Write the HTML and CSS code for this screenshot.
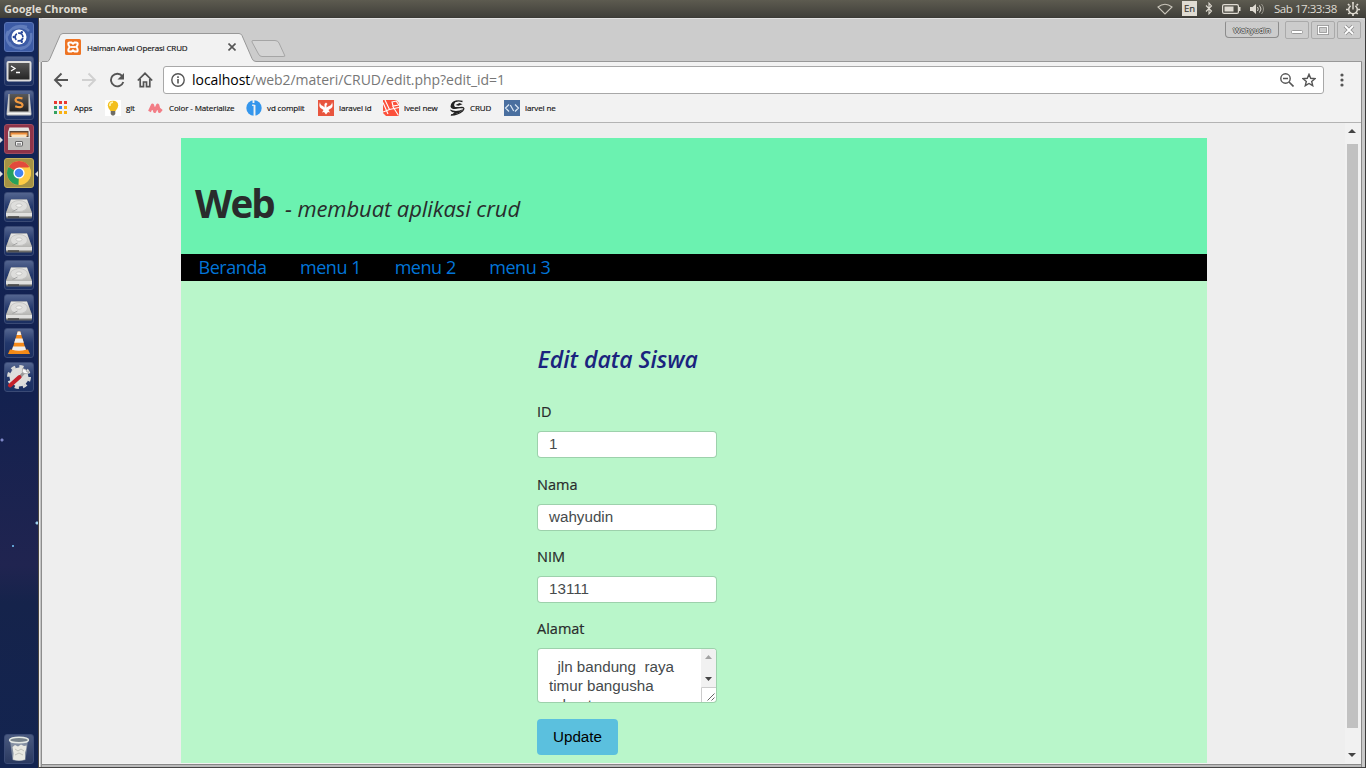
FILE: index.html
```html
<!DOCTYPE html>
<html lang="id">
<head>
<meta charset="utf-8">
<title>Halman Awal Operasi CRUD</title>
<link rel="stylesheet" href="styles.css">
</head>
<body>
<svg width="0" height="0" class="defs">
  <defs>
    <linearGradient id="metal" x2="0" y2="1"><stop stop-color="#e9e9e7"/><stop offset="1" stop-color="#b5b5b2"/></linearGradient>
    <linearGradient id="dark" x2="0" y2="1"><stop stop-color="#595959"/><stop offset="1" stop-color="#222"/></linearGradient>
    <symbol id="disk" viewBox="0 0 30 30">
      <path d="M7 7.500h16l5 13v5q0 1-1 1H3q-1 0-1-1v-5z" fill="#6d6d6b"/>
      <path d="M7 7.500h16l5 13.500H2z" fill="url(#metal)"/>
      <ellipse cx="15" cy="14" rx="8.500" ry="5.500" fill="#dededc" stroke="#c2c2c0" stroke-width=".8"/>
      <ellipse cx="15" cy="13.500" rx="3" ry="1.700" fill="#f2f2f0" stroke="#b5b5b3" stroke-width=".6"/>
      <path d="M8.500 19.500l5-2.500" stroke="#999" stroke-width=".8"/>
      <path d="M2 21h26v3.500H2z" fill="#e0e0de"/><path d="M4 25h11" stroke="#444" stroke-width="1.500"/>
    </symbol>
  </defs>
</svg>

<header class="panel">
  <span class="panel-title">Google Chrome</span>
  <div class="indicators">
    <svg width="16" height="12" viewBox="0 0 16 12"><path d="M1 4Q8-1.500 15 4L8 11z" fill="none" stroke="#c9c5ba" stroke-width="1.100"/></svg>
    <span class="lang">En</span>
    <svg class="bt" width="8" height="13" viewBox="0 0 8 13"><path d="M1 3.500l5.500 5.500L4 11.800V1.200L6.500 4 1 9.500" fill="none" stroke="#dfdbd2" stroke-width="1.100"/></svg>
    <svg class="bat" width="19" height="10" viewBox="0 0 19 10"><rect x=".6" y=".6" width="15.800" height="8.800" rx="1.500" fill="none" stroke="#dfdbd2" stroke-width="1.200"/><path d="M2.500 2.500h9v5h-9z" fill="#dfdbd2"/><path d="M17 3h1.500v4H17z" fill="#dfdbd2"/></svg>
    <svg class="vol" width="16" height="12" viewBox="0 0 16 12"><path d="M1 4h2.500L7 1v10L3.500 8H1z" fill="#dfdbd2"/><path d="M8.500 4q1.500 2 0 4M10.500 2.500q3 3.500 0 7" fill="none" stroke="#dfdbd2"/><path d="M12.500 1q4 5 0 10" fill="none" stroke="#99968d"/></svg>
    <span class="clock">Sab 17:33:38</span>
    <svg width="14" height="14" viewBox="0 0 14 14"><path d="M7 0v2M2 2l1.500 1.500M12 2l-1.500 1.500M0 7.500h2M12 7.500h2M2.300 12l1.500-1.500M11.700 12l-1.500-1.500M7 12v2" stroke="#dfdbd2" stroke-width="1.700"/><path d="M4.700 3.800a4.300 4.300 0 1 0 4.600 0" fill="none" stroke="#dfdbd2" stroke-width="1.500"/><path d="M7 2v5.500" stroke="#dfdbd2" stroke-width="1.400"/></svg>
  </div>
</header>

<div class="desktop">
  <nav class="launcher">
    <div class="tile tile-dash"><svg viewBox="0 0 30 30"><path d="M3 14Q8 1 23 5M27 11Q29 24 16 27M7 24Q0 17 4 9M9 7Q18 2 25 9M21 25Q10 29 5 20" fill="none" stroke="#8ba5d8" stroke-width="2.500" opacity=".45"/><circle cx="15" cy="15" r="7.500" fill="#fff"/><circle cx="15" cy="15" r="3.900" fill="none" stroke="#28479a" stroke-width="1.700" stroke-dasharray="6.900 1.270" stroke-dashoffset="-.6"/><circle cx="9.800" cy="15" r="1.200" fill="#28479a"/><circle cx="17.800" cy="10.300" r="1.200" fill="#28479a"/><circle cx="17.800" cy="19.700" r="1.200" fill="#28479a"/></svg></div>
    <div class="tile"><svg viewBox="0 0 30 30"><rect x="3.500" y="6" width="23" height="18.500" rx="1" fill="url(#dark)" stroke="#ddd" stroke-width="2"/><path d="M7 10l4 2.500-4 2.500M12 16.500h4" fill="none" stroke="#fff" stroke-width="1.300"/></svg></div>
    <div class="tile"><svg viewBox="0 0 30 30"><path d="M4.500 4h21l2 20q0 1.500-1.500 1.500H4q-1.500 0-1.500-1.500z" fill="#c9c9c7"/><path d="M5.500 4h19v17.500h-19z" fill="url(#dark)"/><path d="M3.500 23.500h23" stroke="#f5f5f3" stroke-width="1.500"/><path d="M18.500 8.500Q12 6.500 11.500 9.800q0 2 3.500 2.700 3.800.7 3.500 3-.8 3-7.300.7" fill="none" stroke="#f09a40" stroke-width="2.200"/></svg></div>
    <div class="tile tile-files"><i class="pip"></i><svg viewBox="0 0 30 30"><path d="M5.500 3.500h19L26 8v18H4V8z" fill="url(#metal)"/><path d="M5.500 7h19v6h-19z" fill="#5d4636"/><path d="M6.500 8.500h17V12h-17z" fill="#ef8f3c"/><path d="M7.500 10.500h15V13h-15z" fill="#fbe3bd"/><path d="M4 13h22v13H4z" fill="#bdbdba"/><path d="M4 13.500h22" stroke="#ddd"/><rect x="11.500" y="17.500" width="7" height="4.500" rx=".5" fill="#eee" stroke="#666"/><path d="M13 20h4" stroke="#555"/></svg></div>
    <div class="tile tile-chrome"><i class="pip"></i><i class="pip pip-right"></i><svg viewBox="0 0 30 30"><circle cx="15" cy="15" r="12" fill="#fc4"/><path d="M15 15L4.600 9A12 12 0 0 1 25.400 9z" fill="#e24a3c"/><path d="M15 15l-.5 12A12 12 0 0 1 4.600 9z" fill="#26a05b"/><path d="M15 9.500h10.800q2.400 5.500-.3 11T15 27l5-9z" fill="#fc4"/><circle cx="15" cy="15" r="5.600" fill="#fff"/><circle cx="15" cy="15" r="4.300" fill="#4384f0"/></svg></div>
    <div class="tile"><svg><use href="#disk"/></svg></div>
    <div class="tile"><svg><use href="#disk"/></svg></div>
    <div class="tile"><svg><use href="#disk"/></svg></div>
    <div class="tile"><svg><use href="#disk"/></svg></div>
    <div class="tile"><svg viewBox="0 0 30 30"><path d="M6 21.500h18l2 4.500H4z" fill="#f28a17"/><path d="M13.700 3.500h2.600L22 22.500q-7 2.500-14 0z" fill="#f58a1a"/><path d="M13.700 3.500h2.600l1 3.500h-4.600zM11.500 10.500h7l1.300 4.200h-9.600zM9 18.500h12l1 3.300q-7 2-14 0z" fill="#eee"/></svg></div>
    <div class="tile"><svg viewBox="0 0 30 30"><circle cx="15" cy="15" r="10.500" fill="none" stroke="#d9d9d7" stroke-width="3" stroke-dasharray="4.200 4.050"/><circle cx="15" cy="15" r="9.500" fill="#dededc"/><path d="M15.500 15.500l4.500-5" stroke="#999" stroke-width="3"/><path d="M18.500 6.500q-1 4 1.500 5t5-1.500l-2.500-.5-.5-2z" fill="#f8f8f8" stroke="#999" stroke-width=".7"/><path d="M6 23.500L15.500 15" stroke="#c4202a" stroke-width="4" stroke-linecap="round"/></svg></div>
    <div class="tile tile-trash"><svg viewBox="0 0 30 30"><path d="M6 6l2.500 20q6.500 2 13 0L24 6z" fill="#aab4bb" opacity=".65"/><path d="M8.500 13l2.500-2 3 1.500 3-2 3 1.500 2.500-.5-.5 4-1 3 0 7q-6 2-12 0l.5-6z" fill="#e9e9e2"/><path d="M11 15l3 2 3-2 3 2M11 21l4-2 4 2" fill="none" stroke="#c0c2ba"/><ellipse cx="15" cy="6" rx="9.500" ry="2.800" fill="#78838c" stroke="#e5e9e5" stroke-width="1.400"/></svg></div>
  </nav>

  <div class="window">
    <div class="tabstrip">
      <svg class="tab-shapes" width="1320" height="44" viewBox="0 0 1320 44">
        <path d="M0 43.500H5.500Q7 43 8 40.500L18 17.500Q19 15.500 21 15.500H197Q199 15.500 200 17.500L210 40.500Q211 43.500 214 43.500H1320V45H0z" fill="#f2f2f2" stroke="#989898"/>
        <path d="M211 22.500H233Q236 22.500 237 25L242.500 37Q244 38.500 241 38.500H220Q217.500 38.500 216.500 36L210 24Q209.500 22.500 211 22.500z" fill="#d4d4d4" stroke="#a5a5a5"/>
      </svg>
      <div class="tab">
        <svg width="16" height="16" viewBox="0 0 16 16"><rect width="16" height="16" rx="1.500" fill="#ee7424"/><path d="M4.800 3.500h1.700l1.500 1.300 1.500-1.300h1.700q1.500 0 1.500 1.600T11 8q1.700 1 1.700 2.900t-1.500 1.600H9.500L8 11.200l-1.500 1.300H4.800q-1.500 0-1.500-1.600T5 8Q3.300 7 3.300 5.100T4.800 3.500z" fill="none" stroke="#fff" stroke-width="2"/><path d="M6 8h4" stroke="#fff" stroke-width="1.800"/></svg>
        <span class="tab-title">Halman Awal Operasi CRUD</span>
        <svg class="tab-close" width="8" height="8" viewBox="0 0 8 8"><path d="M.5.500l7 7M7.500.500l-7 7" stroke="#555" stroke-width="1.600"/></svg>
      </div>
      <div class="controls">
        <span class="user">Wahyudin</span>
        <span class="ctl"><svg width="12" height="12"><rect x=".5" y="6.500" width="11" height="3" rx="1" fill="#fff" stroke="#999"/></svg></span>
        <span class="ctl"><svg width="12" height="12"><rect x="1.500" y="2.500" width="9" height="7" fill="none" stroke="#999" stroke-width="3"/><rect x="1.500" y="2.500" width="9" height="7" fill="none" stroke="#fff" stroke-width="1.200"/></svg></span>
        <span class="ctl"><svg width="12" height="12"><path d="M2 2l8 8M10 2l-8 8" stroke="#8f8f8f" stroke-width="3.600"/><path d="M2 2l8 8M10 2l-8 8" stroke="#fff" stroke-width="1.800"/></svg></span>
      </div>
    </div>

    <div class="toolbar">
      <svg width="16" height="16" viewBox="0 0 16 16"><path d="M15 8H2M8.500 1.500L2 8l6.500 6.500" fill="none" stroke="#555" stroke-width="1.900"/></svg>
      <svg width="16" height="16" viewBox="0 0 16 16"><path d="M1 8h13M7.500 1.500L14 8l-6.500 6.500" fill="none" stroke="#d0d0d0" stroke-width="1.900"/></svg>
      <svg width="16" height="16" viewBox="0 0 16 16"><path d="M13.300 4.200A6.300 6.300 0 1 0 14.300 10" fill="none" stroke="#555" stroke-width="1.900"/><path d="M15 1v6.500H8.500z" fill="#555"/></svg>
      <svg width="16" height="16" viewBox="0 0 16 16"><path d="M.8 8.500L8 1.300l7.200 7.200M3.200 7v7.700h3.300V10h3v4.700h3.300V7" fill="none" stroke="#555" stroke-width="1.700"/></svg>
      <div class="omnibox">
        <svg width="14" height="14" viewBox="0 0 14 14"><circle cx="7" cy="7" r="6.200" fill="none" stroke="#555" stroke-width="1.400"/><path d="M7 6v4.500M7 3.300v1.600" stroke="#555" stroke-width="1.600"/></svg>
        <span class="url"><b>localhost</b>/web2/materi/CRUD/edit.php?edit_id=1</span>
        <svg width="14" height="14" viewBox="0 0 14 14"><circle cx="5.500" cy="5.500" r="4.700" fill="none" stroke="#555" stroke-width="1.400"/><path d="M3 5.500h5M9 9l4.500 4.500" stroke="#555" stroke-width="1.600"/></svg>
        <svg width="14" height="14" viewBox="0 0 14 14"><path d="M7 1.300l1.700 4 4.300.4-3.300 2.800 1 4.200L7 10.500l-3.700 2.200 1-4.200L1 5.700l4.300-.4z" fill="none" stroke="#555" stroke-width="1.400"/></svg>
      </div>
      <svg class="more" width="4" height="14"><circle cx="2" cy="2" r="1.600" fill="#555"/><circle cx="2" cy="7" r="1.600" fill="#555"/><circle cx="2" cy="12" r="1.600" fill="#555"/></svg>
    </div>

    <div class="bookmarks">
      <span class="bm bm-apps"><svg width="16" height="16" viewBox="0 0 16 16"><path d="M1 1h3v3H1zM6 1h3v3H6zM11 1h3v3h-3z" fill="#e8392f"/><path d="M1 6h3v3H1z" fill="#34a160"/><path d="M6 6h3v3H6z" fill="#3b82ec"/><path d="M11 6h3v3h-3zM6 11h3v3H6zM11 11h3v3h-3z" fill="#f8b114"/><path d="M1 11h3v3H1z" fill="#34a160"/></svg>Apps</span>
      <span class="bm bm-git"><svg width="16" height="16" viewBox="0 0 16 16"><path fill="#fff" d="M0 0h16v16H0z"/><path d="M8 .8q5.200 0 5.200 4.700Q13.200 8 10.500 11h-5Q2.800 8 2.800 5.500 2.800.8 8 .8z" fill="#f3bf1c"/><path d="M5 6q-.5-3.500 3-3.800" stroke="#fff4ae" stroke-width="1.800" fill="none"/><path d="M5.700 11h4.600v3L9 15.500H7L5.700 14z" fill="#6f6d66"/></svg>git</span>
      <span class="bm bm-color"><svg width="16" height="16" viewBox="0 0 16 16"><path d="M1.500 11.500L4.500 5l2.200 6.500L9.700 5l1.800 6.500L13.500 9" fill="none" stroke="#f27d86" stroke-width="3" stroke-linejoin="round"/></svg>Color - Materialize</span>
      <span class="bm bm-vd"><svg width="16" height="16" viewBox="0 0 16 16"><circle cx="8" cy="8" r="7.700" fill="#3496ec"/><path d="M7.500 0v3M8.500 5v11" stroke="#f2f2f2" stroke-width="1.900"/><path d="M6 5.200h2.500" stroke="#f2f2f2" stroke-width="1.300"/></svg>vd complit</span>
      <span class="bm bm-lid"><svg width="16" height="16" viewBox="0 0 16 16"><path fill="#e8553e" d="M0 0h16v16H0z"/><path d="M2 2q0 3 3 4L6.500 7.500 6.500 4 8 2.500 9.500 4 8.500 5v2.500L11 6q3-1 3-4 1.500 4-.5 6L10.500 10l1.500 2.500-2-.5L8 14.500 6 12l-2 .5L5.500 10 2.500 8Q.5 6 2 2z" fill="#fff"/></svg>laravel id</span>
      <span class="bm bm-new"><svg width="16" height="16" viewBox="0 0 16 16"><path fill="#fb503b" d="M0 0h13l3 3v13H3l-3-3z"/><path d="M0 2.500l5 11.500M2 0l4.500 9.500M0 12l6.500-2.500L16 7.500M9 2l4-1 3 4-6 1zM9.500 6l6 9.500" fill="none" stroke="#fff" stroke-width="1.100"/></svg>lveel new</span>
      <span class="bm bm-crud"><svg width="16" height="16" viewBox="0 0 16 16"><path d="M13.500 1.500Q6-.3 3 3.800.8 8 5 8.300l8-1q3.500.5.500 3.700Q9 15 2 15" fill="none" stroke="#222" stroke-width="1.300"/><path d="M1.800 7Q2 1.500 8 .5 3.500 4 6 7l6 0-7 2zM6.500 5l4-2 3 1.300-4 1.500zM1 9.500q6 3 13.500-.5L10 13l-9 2.500Q4 14 5.500 12.300 2 12.500 1 9.500z" fill="#222"/></svg>CRUD</span>
      <span class="bm"><svg width="16" height="16" viewBox="0 0 16 16"><path fill="#4a6f9f" d="M0 0h16v16H0z"/><path d="M5 4.500L1.500 8 5 11.500M11 4.500L14.500 8 11 11.500M6.300 5l3.400 6" fill="none" stroke="#dce8f4" stroke-width="1.200"/></svg>larvel ne</span>
    </div>

    <div class="viewport">
      <div class="page">
        <div class="banner"><h1>Web</h1><em>- membuat aplikasi crud</em></div>
        <nav class="menu"><a>Beranda</a><a>menu 1</a><a>menu 2</a><a>menu 3</a></nav>
        <main class="content">
          <h2>Edit data Siswa</h2>
          <div class="field first"><label>ID</label><div class="input">1</div></div>
          <div class="field"><label>Nama</label><div class="input">wahyudin</div></div>
          <div class="field"><label>NIM</label><div class="input">13111</div></div>
          <div class="field"><label>Alamat</label>
            <div class="textarea">
              <div class="area-text">  jln bandung  raya
timur bangusha
  deret</div>
              <div class="area-bar">
                <svg width="15" height="53" viewBox="0 0 15 53"><path d="M0 0h15v38H0z" fill="#f1f1f1"/><path d="M4 10l3.500-4L11 10z" fill="#a3a3a3"/><path d="M4 28l3.500 4L11 28z" fill="#444"/><path d="M.5 53V38.500H15" fill="#fff" stroke="#ccc"/><path d="M6.500 51.500l7-7M10.500 51.500l3-3" stroke="#666"/></svg>
              </div>
            </div>
          </div>
          <button class="update">Update</button>
        </main>
      </div>
      <div class="scrollbar">
        <svg class="arrow" width="15" height="21"><path d="M3 10l4-4 4 4z" fill="#444"/></svg>
        <div class="thumb"></div>
        <svg class="arrow" width="15" height="17"><path d="M3 7l4 4 4-4z" fill="#444"/></svg>
      </div>
    </div>
  </div>
</div>
</body>
</html>
```
FILE: styles.css
```css
* { box-sizing: border-box; }
body { margin: 0; width: 1366px; height: 768px; overflow: hidden; display: flex; flex-direction: column; background: #333; font-family: "Open Sans", "Noto Sans", sans-serif; }
svg { display: block; flex: none; }
.defs { position: absolute; }

/* top panel */
.panel { height: 18px; flex: none; display: flex; align-items: center; justify-content: space-between; padding: 0 6px 0 4px; background: linear-gradient(#5d5b50, #403f3a); border-bottom: 1px solid #3c3b37; color: #dfdbd2; }
.panel-title { font-size: 11px; font-weight: 700; line-height: 17px; letter-spacing: -.02px; }
.indicators { display: flex; align-items: center; }
.lang { width: 15px; height: 15px; margin: 0 8px 0 9px; background: #dfdbd2; color: #3c3b37; font-size: 9.500px; line-height: 15px; text-align: center; -webkit-text-stroke: .2px; }
.bt { margin-right: 8px; }
.bat { margin: 0 8px 0 1px; }
.clock { margin: 0 9px 0 9px; width: 63px; font-size: 11.500px; line-height: 17px; letter-spacing: -.45px; white-space: nowrap; }

/* launcher */
.desktop { flex: 1; min-height: 0; display: flex; }
.launcher { width: 38px; flex: none; padding: 4px 4px 4px; display: flex; flex-direction: column; gap: 4px; background: radial-gradient(circle at 13px 528px, #5f9fd0 0 1px, transparent 1.500px), radial-gradient(circle at 2px 422px, #7d86c8 0 1px, transparent 2px), radial-gradient(circle at 37px 505px, #9ed2ee 0 1px, transparent 2px), linear-gradient(#12265a, #13214f 50%, #202450 73%, #15234b 78%, #132450); }
.tile { position: relative; width: 30px; height: 30px; flex: none; border: 1px solid #3a4a75; border-radius: 3px; background: linear-gradient(#54658f, #22376b 50%, #1b2f61); }
.tile svg { width: 30px; height: 30px; margin: -1px; }
.tile-dash { background: #3c5ba6; border-color: #5a74b5; }
.tile-files { background: #8f3449; border-color: #a04c60; }
.tile-chrome { background: #a59245; border-color: #c4b05b; }
.tile-trash { margin-top: auto; background: linear-gradient(#4a5a80, #2a3960); }
.pip { position: absolute; left: -5px; top: 12px; border: 3px solid transparent; border-left-color: #ddd; border-right: 0; }
.pip-right { left: 30px; border-left: 0; border-right: 3px solid #ddd; }

/* browser window */
.window { flex: 1; min-width: 0; display: flex; flex-direction: column; background: #f2f2f2; border-left: 1px solid #4a4540; border-right: 1px solid #3a3a3a; border-bottom: 1px solid #444; box-shadow: inset 1px 0 #eee, inset 2px 0 #c4c4c4, inset 3px 0 #8d8d8d, inset -3px 0 #c8c8c8, inset -4px 0 #888, inset 0 -2px #bbb, inset 0 -3px #888; }
.tabstrip { position: relative; height: 44px; flex: none; display: flex; justify-content: space-between; padding-left: 26px; background: #ccc; border-top: 1px solid #e2e2e2; border-radius: 4px 4px 0 0; }
.tab-shapes { position: absolute; left: 3px; top: -1px; }
.tab { position: relative; display: flex; align-items: center; height: 30px; margin-top: 13px; }
.tab-title { width: 105px; margin-left: 6px; font-size: 8px; letter-spacing: -.14px; color: #111; -webkit-text-stroke: .15px; white-space: nowrap; }
.tab-close { margin-left: 36px; }
.controls { position: relative; display: flex; padding: 2px 4px 0 0; }
.user { width: 54px; height: 17px; margin-right: 6px; border: 1px solid #8c8c8c; border-top-color: #bbb; border-radius: 2px 2px 4px 4px; font-size: 8px; line-height: 15px; text-align: center; color: #eee; text-shadow: 1px 0 #555, -1px 0 #555, 0 1px #555, 0 -1px #555; }
.ctl { width: 24px; height: 18px; margin-right: 2px; border: 1px solid #aaa; border-radius: 2px; display: grid; place-items: center; }
.ctl:last-child { margin-right: 0; }

.toolbar { height: 35px; flex: none; display: flex; align-items: center; gap: 12px; padding-left: 14px; }
.omnibox { width: 1161px; height: 28px; margin-left: -2px; display: flex; align-items: center; gap: 8px; padding: 0 7px; background: #fff; border: 1px solid #a8a8a8; border-radius: 3px; }
.url { flex: 1; margin-left: -1px; font-size: 14px; line-height: 24px; letter-spacing: -.04px; color: #777; }
.url b { font-weight: 400; color: #000; }
.more { margin-left: 4px; }
.bookmarks { height: 26px; flex: none; display: flex; align-items: flex-start; padding: 3px 0 0 11px; margin: 0 4px 0 3px; border-bottom: 1px solid #b3b3b3; }
.bm { display: flex; align-items: center; gap: 5px; margin-right: 12px; height: 16px; font-size: 8px; line-height: 12px; letter-spacing: -.12px; color: #111; white-space: nowrap; -webkit-text-stroke: .15px; }
.bm-apps { width: 40px; }
.bm-git { width: 31px; }
.bm-color { width: 86px; }
.bm-vd { width: 60px; }
.bm-lid { width: 53px; }
.bm-new { width: 54px; }
.bm-crud { width: 43px; }

/* document */
.viewport { flex: 1; min-height: 0; display: flex; justify-content: space-between; margin: 0 4px 3px 3px; background: #eee; overflow: hidden; border-bottom: 1px solid #f2f2f2; }
.page { width: 1026px; margin: 15px 0 0 139px; display: flex; flex-direction: column; color: #292b2c; }
.banner { height: 116px; flex: none; display: flex; align-items: baseline; gap: 11px; padding: 38px 0 0 14px; background: #6bf2b0; }
.banner h1 { margin: 0; font-size: 38.500px; line-height: 54px; letter-spacing: -1.800px; font-weight: 700; }
.banner em { position: relative; top: -1px; font-size: 22px; letter-spacing: -.08px; }
.menu { height: 27px; flex: none; display: flex; gap: 33.500px; padding-left: 17.500px; background: #000; color: #0275d8; font-size: 18px; line-height: 27px; letter-spacing: -.45px; }
.content { flex: 1; padding: 63px 0 0 356.500px; background: #b9f6ca; }
.content h2 { margin: 0; font-size: 23px; line-height: 30px; font-style: italic; font-weight: 600; color: #1a237e; }
.field { width: 180px; margin-left: -.5px; padding-top: 15px; }
.field.first { padding-top: 27px; margin-bottom: 1px; }
.field label { display: block; height: 30px; font-size: 14.500px; line-height: 22px; -webkit-text-stroke: .2px; }
.input { height: 27px; padding: 0 11px; border: 1px solid rgba(0, 0, 0, .15); border-radius: 4px; background: #fff; background-clip: padding-box; color: #464a4c; font: 15.200px/24px "Liberation Sans", sans-serif; }
.textarea { height: 55px; display: flex; border: 1px solid rgba(0, 0, 0, .15); border-radius: 4px; overflow: hidden; background: #fff; background-clip: padding-box; }
.area-text { flex: 1; padding: 8px 0 0 11px; white-space: pre; color: #464a4c; font: 15.200px/19px "Liberation Sans", sans-serif; }
.update { display: block; width: 81px; height: 36px; margin: 16px 0 0 -.5px; padding: 0 0 2px; border: 0; border-radius: 4px; background: #5bc0de; color: #000; font: 15.200px "Liberation Sans", sans-serif; }
.scrollbar { width: 16px; flex: none; background: #f1f1f1; display: flex; flex-direction: column; }
.thumb { flex: none; width: 11px; height: 584px; margin: 0 2px; background: #c1c1c1; }
.scrollbar .arrow:last-child { margin-top: 18px; }
```
